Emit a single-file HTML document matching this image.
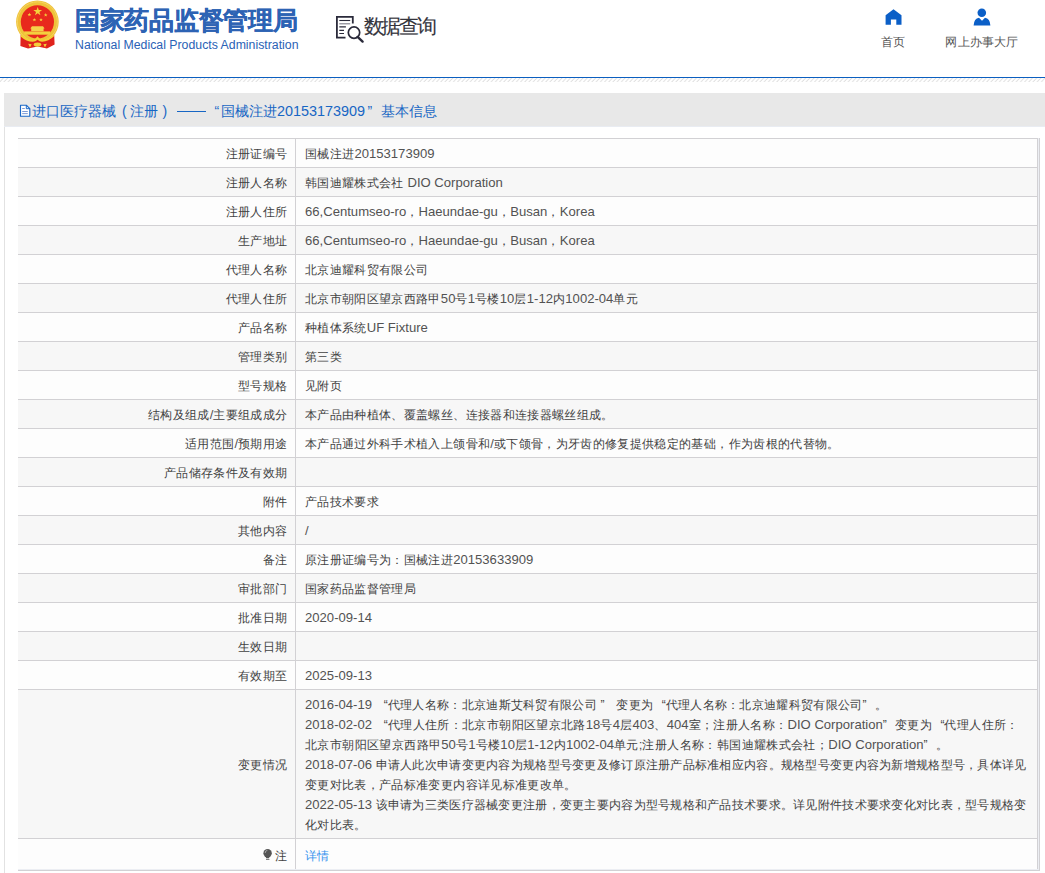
<!DOCTYPE html>
<html><head><meta charset="utf-8">
<style>
*{margin:0;padding:0;box-sizing:border-box}
html,body{width:1045px;height:873px;overflow:hidden;background:#fff;font-family:"Liberation Sans",sans-serif;}
.abs{position:absolute}
.t1{position:absolute;left:75px;top:4px;font-size:25px;font-weight:bold;color:#2d63b4;-webkit-text-stroke:.3px #2d63b4;white-space:nowrap;line-height:32px;letter-spacing:-0.3px}
.t2{position:absolute;left:75px;top:36.5px;font-size:12.3px;color:#2a62b6;white-space:nowrap;line-height:16px}
.sqt{position:absolute;left:363.5px;top:12px;font-size:20px;color:#34343c;white-space:nowrap;line-height:28px;letter-spacing:-2.3px;-webkit-text-stroke:.15px #34343c}
.nav{position:absolute;text-align:center;font-size:12px;color:#555;white-space:nowrap;letter-spacing:.2px}
.bl{position:absolute;left:0;top:77px;width:1045px;height:1px;background:#0b5fc0}
.box{position:absolute;left:4px;top:127px;width:1px;height:746px;background:#e2e2e2}
.bar{position:absolute;left:4px;top:93px;width:1041px;height:34px;background:#e8e8e8;border-bottom:1px solid #e9ecf2}
.bart{position:absolute;left:32px;top:101px;font-size:14px;color:#1766c4;white-space:nowrap;line-height:20px}
.bart.e2{font-size:14px}
.bart .lq,.bart .rq{display:inline-block;width:14px}
.bart .lq{text-align:right}
.r{position:absolute;left:18px;width:1020px;height:29px;border-bottom:1px solid #d2d1d4;font-size:12px;color:#424242;line-height:28px;white-space:nowrap;letter-spacing:.35px}
.r.o{background:#fdfdfd}
.r.ev{background:#f7f7f7}
.r .l{position:absolute;left:0;top:0;width:277px;height:100%;text-align:right;padding-right:7.5px;padding-top:1px}
.r .v{position:absolute;left:277px;top:0;width:743px;height:100%;border-left:1px solid #d2d1d4;border-right:1px solid #d2d1d4;padding-left:9px;padding-top:1px}
.e{font-size:13.1px;letter-spacing:0;color:#525252}
.lq,.rq{display:inline-block;width:12.24px;letter-spacing:0}
.lq{text-align:right}
.rq{text-align:left}
.r.big{height:149px}
.r.big .l{line-height:148px}
.r.big .v{line-height:20px;padding-top:5px}
.r.last{height:30px;border-bottom:none}
.r.last .l,.r.last .v{line-height:30px;padding-top:2px}
.lnk{color:#3592ee}
.bulb{display:inline-block;vertical-align:-1px;margin-right:2px}
.tb{position:absolute;left:18px;top:138px;width:1022px;height:1px;background:#d2d1d4}
.ob1{position:absolute;left:1038px;top:138px;width:1px;height:731px;background:#eceef3}
.ob2{position:absolute;left:1039px;top:138px;width:1px;height:733px;background:#d2d1d4}
.ob3{position:absolute;left:18px;top:869px;width:1021px;height:1px;background:#eceef3}
.ob4{position:absolute;left:18px;top:870px;width:1022px;height:1px;background:#d2d1d4}
</style></head><body>
<svg class="abs" style="left:0;top:0" width="70" height="52" viewBox="0 0 70 52">
  
  <circle cx="37.4" cy="21.8" r="21.3" fill="#efc23a"/>
  <circle cx="37.4" cy="21.8" r="20" fill="none" stroke="#f6d460" stroke-width="1"/>
  <circle cx="37.4" cy="21.8" r="16.6" fill="#e8291d"/>
  <polygon points="37.7,7 38.8,10.1 42.1,10.1 39.4,12.1 40.4,15.2 37.7,13.3 35,15.2 36,12.1 33.3,10.1 36.6,10.1" fill="#f5d33c"/>
  <polygon points="29.4,12.8 29.9,14.1 31.2,14.1 30.2,14.9 30.6,16.2 29.4,15.4 28.2,16.2 28.6,14.9 27.6,14.1 28.9,14.1" fill="#f5d33c"/>
  <polygon points="45.7,13.1 46.2,14.4 47.5,14.4 46.5,15.2 46.9,16.5 45.7,15.7 44.5,16.5 44.9,15.2 43.9,14.4 45.2,14.4" fill="#f5d33c"/>
  <polygon points="34.4,17.9 34.9,19.2 36.2,19.2 35.2,20 35.6,21.3 34.4,20.5 33.2,21.3 33.6,20 32.6,19.2 33.9,19.2" fill="#f5d33c"/>
  <polygon points="41,17.9 41.5,19.2 42.8,19.2 41.8,20 42.2,21.3 41,20.5 39.8,21.3 40.2,20 39.2,19.2 40.5,19.2" fill="#f5d33c"/>
  <path d="M32 26.2 L43 26.2 L44.6 28.6 L43.6 28.6 L43.6 31.2 L31.2 31.2 L31.2 28.6 L30.3 28.6 Z" fill="#f5d04a"/>
  <path d="M24.2 31.4 L50.2 31.4 L50.2 34.7 L24.2 34.7 Z" fill="#f4cf3e"/>
  <path d="M20.6 35 Q27 40.8 32.8 40.8 Q35.5 40.8 37.5 37.9 Q39.5 40.8 42.2 40.8 Q48 40.8 54.2 35 L54.6 44.5 L47 48.6 L37.5 46.5 L28 48.6 L20.4 46 Z" fill="#e0231c"/>
  <path d="M21 35.4 Q27 40.8 32.8 40.8 Q35.5 40.8 37.5 37.9 Q39.5 40.8 42.2 40.8 Q48 40.8 53.6 35.4" stroke="#f3cf35" stroke-width="2" fill="none"/>
  <ellipse cx="37.5" cy="44.6" rx="3.8" ry="2" fill="#f4d03a"/>
  <path d="M28.2 43.8 L31.6 44.3 L30 47.6 Z M46.8 43.8 L43.4 44.3 L45 47.6 Z" fill="#f4d03a"/>
</svg>
<div class="t1">国家药品监督管理局</div>
<div class="t2">National Medical Products Administration</div>
<svg class="abs" style="left:330px;top:10px" width="40" height="36" viewBox="0 0 40 36">
  <path d="M22.8 13.6 V6.9 H6.9 V27.6 H15.5" stroke="#2a2a3a" stroke-width="1.8" fill="none"/>
  <path d="M9.3 10.5 H20.2" stroke="#2a2a3a" stroke-width="1.1"/>
  <path d="M9.3 13.8 H20.2" stroke="#7a7a86" stroke-width="1.1"/>
  <path d="M9.3 16.9 H15.9 M9.3 20.4 H14 M9.3 23.5 H14" stroke="#2a2a3a" stroke-width="1.1"/>
  <circle cx="24" cy="22.6" r="5.7" stroke="#2a2a3a" stroke-width="1.7" fill="#fff"/>
  <path d="M27.6 26.9 L32.6 31.6" stroke="#2a2a3a" stroke-width="2.4" stroke-linecap="round"/>
</svg>
<div class="sqt">数据查询</div>
<svg class="abs" style="left:880px;top:5px" width="30" height="25" viewBox="880 5 30 25">
  <path d="M893.5 9.2 L901.5 15.3 L901.5 24.8 L896.3 24.8 L896.3 19.6 L890.9 19.6 L890.9 24.8 L885.6 24.8 L885.6 15.3 Z" fill="#0b5fc7"/>
</svg>
<div class="nav" style="left:871px;top:32px;width:44px;line-height:20px">首页</div>
<svg class="abs" style="left:965px;top:5px" width="35" height="25" viewBox="965 5 35 25">
  <circle cx="981.8" cy="12.7" r="4.3" fill="#0b5fc7"/>
  <path d="M973.6 25.4 Q974 18.5 979 17.7 L982 20.7 L985 17.7 Q990 18.5 990.4 25.4 Z" fill="#0b5fc7"/>
</svg>
<div class="nav" style="left:942px;top:32px;width:80px;line-height:20px">网上办事大厅</div>
<div class="bl"></div>
<svg class="abs" style="left:0;top:78px" width="1045" height="4">
  <defs><pattern id="hp" width="4.2" height="4" patternUnits="userSpaceOnUse"><path d="M-0.5 4.2 L3.7 -0.2" stroke="#dcdcdc" stroke-width="0.9"/><path d="M3.7 4.2 L7.9 -0.2" stroke="#dcdcdc" stroke-width="0.9"/></pattern></defs>
  <rect width="1045" height="4" fill="url(#hp)"/>
</svg>
<div class="bar"></div>
<svg class="abs" style="left:17px;top:102px" width="16" height="17" viewBox="17 102 16 17">
  <path d="M20.5 105.2 H26.3 L29.8 108.7 V116.2 H20.5 Z" fill="#fff" stroke="#1a68c8" stroke-width="1.15" stroke-linejoin="round"/>
  <path d="M26.3 105.2 V108.7 H29.8" stroke="#1a68c8" stroke-width="1" fill="none"/>
  <path d="M22.2 108.5 H24.8 M22.2 111.5 H27.8 M22.2 113.6 H27.8" stroke="#6d8fd2" stroke-width=".9"/>
</svg>
<div class="bart" style="left:32px">进口医疗器械</div>
<div class="bart e2" style="left:122px">(</div>
<div class="bart" style="left:130px">注册</div>
<div class="bart e2" style="left:162.5px">)</div>
<div class="abs" style="left:176.5px;top:110.5px;width:29.8px;height:1.3px;background:#1766c4"></div>
<div class="bart e2" style="left:214.5px">“</div>
<div class="bart" style="left:221px">国械注进</div>
<div class="bart e2" style="left:277px;font-size:14.4px">20153173909</div>
<div class="bart e2" style="left:367.5px">”</div>
<div class="bart" style="left:380.5px">基本信息</div>
<div class="box"></div>
<div class="tb"></div>
<div class="r o" style="top:139px"><div class="l">注册证编号</div><div class="v">国械注进<span class="e">20153173909</span></div></div>
<div class="r ev" style="top:168px"><div class="l">注册人名称</div><div class="v">韩国迪耀株式会社<span class="e">&#32;DIO&#32;Corporation</span></div></div>
<div class="r o" style="top:197px"><div class="l">注册人住所</div><div class="v"><span class="e">66,Centumseo-ro</span>，<span class="e">Haeundae-gu</span>，<span class="e">Busan</span>，<span class="e">Korea</span></div></div>
<div class="r ev" style="top:226px"><div class="l">生产地址</div><div class="v"><span class="e">66,Centumseo-ro</span>，<span class="e">Haeundae-gu</span>，<span class="e">Busan</span>，<span class="e">Korea</span></div></div>
<div class="r o" style="top:255px"><div class="l">代理人名称</div><div class="v">北京迪耀科贸有限公司</div></div>
<div class="r ev" style="top:284px"><div class="l">代理人住所</div><div class="v">北京市朝阳区望京西路甲<span class="e">50</span>号<span class="e">1</span>号楼<span class="e">10</span>层<span class="e">1-12</span>内<span class="e">1002-04</span>单元</div></div>
<div class="r o" style="top:313px"><div class="l">产品名称</div><div class="v">种植体系统<span class="e">UF&#32;Fixture</span></div></div>
<div class="r ev" style="top:342px"><div class="l">管理类别</div><div class="v">第三类</div></div>
<div class="r o" style="top:371px"><div class="l">型号规格</div><div class="v">见附页</div></div>
<div class="r ev" style="top:400px"><div class="l">结构及组成<span class="e">/</span>主要组成成分</div><div class="v">本产品由种植体、覆盖螺丝、连接器和连接器螺丝组成。</div></div>
<div class="r o" style="top:429px"><div class="l">适用范围<span class="e">/</span>预期用途</div><div class="v">本产品通过外科手术植入上颌骨和<span class="e">/</span>或下颌骨，为牙齿的修复提供稳定的基础，作为齿根的代替物。</div></div>
<div class="r ev" style="top:458px"><div class="l">产品储存条件及有效期</div><div class="v"></div></div>
<div class="r o" style="top:487px"><div class="l">附件</div><div class="v">产品技术要求</div></div>
<div class="r ev" style="top:516px"><div class="l">其他内容</div><div class="v"><span class="e">/</span></div></div>
<div class="r o" style="top:545px"><div class="l">备注</div><div class="v">原注册证编号为：国械注进<span class="e">20153633909</span></div></div>
<div class="r ev" style="top:574px"><div class="l">审批部门</div><div class="v">国家药品监督管理局</div></div>
<div class="r o" style="top:603px"><div class="l">批准日期</div><div class="v"><span class="e">2020-09-14</span></div></div>
<div class="r ev" style="top:632px"><div class="l">生效日期</div><div class="v"></div></div>
<div class="r o" style="top:661px"><div class="l">有效期至</div><div class="v"><span class="e">2025-09-13</span></div></div>
<div class="r ev big" style="top:690px"><div class="l">变更情况</div><div class="v"><span style="letter-spacing:.3px"><span class="e">2016-04-19&#32;</span><span class="lq">“</span>代理人名称：北京迪斯艾科贸有限公司<span class="e">&#32;</span><span class="rq">”</span><span class="e">&#32;</span>变更为<span class="lq">“</span>代理人名称：北京迪耀科贸有限公司<span class="rq">”</span>。</span><br><span style="letter-spacing:.37px"><span class="e">2018-02-02&#32;</span><span class="lq">“</span>代理人住所：北京市朝阳区望京北路<span class="e">18</span>号<span class="e">4</span>层<span class="e">403</span>、<span class="e">404</span>室；注册人名称：<span class="e">DIO&#32;Corporation</span><span class="rq">”</span>变更为<span class="lq">“</span>代理人住所：</span><br><span style="letter-spacing:.39px">北京市朝阳区望京西路甲<span class="e">50</span>号<span class="e">1</span>号楼<span class="e">10</span>层<span class="e">1-12</span>内<span class="e">1002-04</span>单元<span class="e">;</span>注册人名称：韩国迪耀株式会社；<span class="e">DIO&#32;Corporation</span><span class="rq">”</span>。</span><br><span style="letter-spacing:.28px"><span class="e">2018-07-06&#32;</span>申请人此次申请变更内容为规格型号变更及修订原注册产品标准相应内容。规格型号变更内容为新增规格型号，具体详见</span><br><span style="letter-spacing:.35px">变更对比表，产品标准变更内容详见标准更改单。</span><br><span style="letter-spacing:.28px"><span class="e">2022-05-13&#32;</span>该申请为三类医疗器械变更注册，变更主要内容为型号规格和产品技术要求。详见附件技术要求变化对比表，型号规格变</span><br><span style="letter-spacing:.35px">化对比表。</span></div></div>
<div class="r o last" style="top:839px"><div class="l"><svg class="bulb" width="10" height="13" viewBox="0 0 10 13"><circle cx="4.6" cy="5.2" r="4.2" fill="#555"/><path d="M2.6 8.3 L6.6 8.3 L6 10.2 L3.2 10.2 Z" fill="#555"/><rect x="3" y="10.9" width="3.4" height="1" fill="#777"/><path d="M2.2 5 A2.6 2.6 0 0 1 4.4 2.3" stroke="#bbb" stroke-width=".8" fill="none"/></svg>注</div><div class="v"><span class="lnk">详情</span></div></div>
<div class="ob1"></div><div class="ob2"></div><div class="ob3"></div><div class="ob4"></div>
</body></html>
